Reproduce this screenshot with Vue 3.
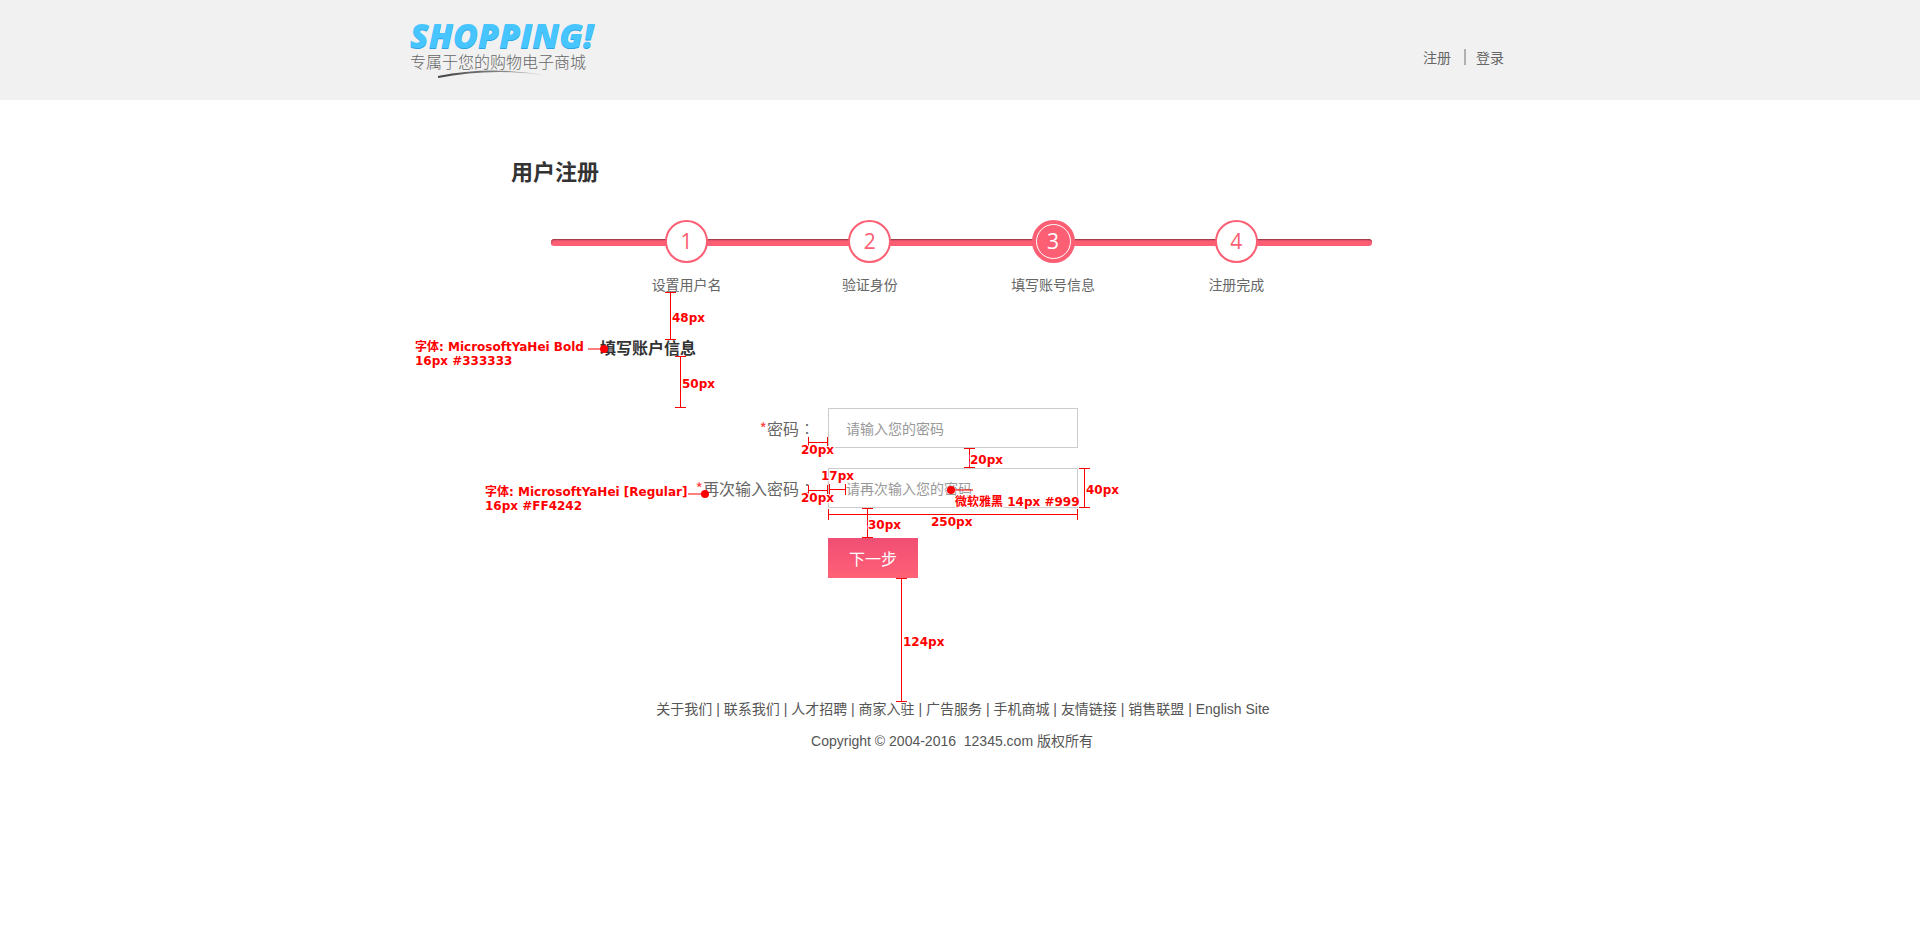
<script setup>
import { ref } from 'vue'

const password = ref('')
const confirmPassword = ref('')

const steps = [
  { id: 1, label: '设置用户名' },
  { id: 2, label: '验证身份' },
  { id: 3, label: '填写账号信息' },
  { id: 4, label: '注册完成' },
]
const currentStep = 3

const footerLinks = ['关于我们', '联系我们', '人才招聘', '商家入驻', '广告服务', '手机商城', '友情链接', '销售联盟', 'English Site']

// Vertical spacing marks: x of the stem, from top to bottom
const verticals = [
  { x: 260, top: 292, bottom: 340, text: '48px', tx: 262, ty: 322 },
  { x: 270, top: 356, bottom: 408, text: '50px', tx: 272, ty: 388 },
  { x: 559, top: 448, bottom: 468, text: '20px', tx: 560, ty: 464 },
  { x: 674, top: 468, bottom: 508, text: '40px', tx: 676, ty: 494 },
  { x: 457, top: 508, bottom: 538, text: '30px', tx: 458, ty: 529 },
  { x: 491, top: 578, bottom: 702, text: '124px', tx: 493, ty: 646 },
]

// Horizontal spacing marks: y of the stem, from left to right
const horizontals = [
  { y: 442, left: 398, right: 418, text: '20px', tx: 391, ty: 454 },
  { y: 490, left: 398, right: 418, text: '20px', tx: 391, ty: 502 },
  { y: 489, left: 419, right: 436, text: '17px', tx: 411, ty: 480 },
  { y: 514, left: 418, right: 668, text: '250px', tx: 521, ty: 526 },
]

// Leader dots with the lines that lead to their notes
const dots = [
  { x: 194, y: 349, from: 178, to: 194 },
  { x: 295, y: 494, from: 278, to: 295 },
  { x: 541, y: 490, from: 541, to: 563 },
]

const notes = [
  { x: 5, y: 351, text: '字体: MicrosoftYaHei Bold' },
  { x: 5, y: 365, text: '16px #333333' },
  { x: 75, y: 496, text: '字体: MicrosoftYaHei [Regular]' },
  { x: 75, y: 510, text: '16px #FF4242' },
  { x: 545, y: 506, text: '微软雅黑 14px #999' },
]
</script>

<template>
  <div class="page">
    <header class="header">
      <div class="header-inner">
        <a class="logo" href="#">
          <span class="logo-name">SHOPPING!</span>
          <span class="logo-slogan">专属于您的购物电子商城</span>
          <svg class="logo-swoosh" width="112" height="10" viewBox="0 0 112 10" aria-hidden="true">
            <defs>
              <linearGradient id="swoosh" x1="0" x2="1" y1="0" y2="0">
                <stop offset="0" stop-color="#444" />
                <stop offset="0.6" stop-color="#888" />
                <stop offset="1" stop-color="#ccc" />
              </linearGradient>
            </defs>
            <path d="M0 6 Q55 -5 111 6 Q55 -3 0 8 Z" fill="url(#swoosh)" />
          </svg>
        </a>
        <nav class="account">
          <a href="#">注册</a>
          <span class="divider"></span>
          <a href="#">登录</a>
        </nav>
      </div>
    </header>

    <main class="main">
      <h1 class="title">用户注册</h1>

      <ol class="steps">
        <li v-for="step in steps" :key="step.id" class="step" :class="{ active: step.id === currentStep }">
          <span class="step-number"><span class="step-ring">{{ step.id }}</span></span>
          <span class="step-label">{{ step.label }}</span>
        </li>
      </ol>

      <h2 class="subtitle">填写账户信息</h2>

      <form class="form" @submit.prevent>
        <div class="field">
          <label for="password"><span class="required">*</span>密码<span class="colon">：</span></label>
          <input id="password" v-model="password" type="password" placeholder="请输入您的密码" />
        </div>
        <div class="field">
          <label for="confirm"><span class="required">*</span>再次输入密码<span class="colon">：</span></label>
          <input id="confirm" v-model="confirmPassword" type="password" placeholder="请再次输入您的密码" />
        </div>
        <button class="next" type="submit">下一步</button>
      </form>
    </main>

    <footer class="footer">
      <nav class="footer-links">
        <template v-for="(link, i) in footerLinks" :key="link"><template v-if="i"> | </template><a href="#">{{ link }}</a></template>
      </nav>
      <p class="copyright">Copyright © 2004-2016&nbsp; 12345.com 版权所有</p>
    </footer>

    <svg class="marks" width="1100" height="720" viewBox="0 0 1100 720">
      <g v-for="m in verticals" :key="'v' + m.top" shape-rendering="crispEdges">
        <rect :x="m.x" :y="m.top" width="1" :height="m.bottom - m.top" />
        <rect :x="m.x - 5" :y="m.top" width="11" height="1" />
        <rect :x="m.x - 5" :y="m.bottom - 1" width="11" height="1" />
      </g>
      <g v-for="m in horizontals" :key="'h' + m.y" shape-rendering="crispEdges">
        <rect :x="m.left" :y="m.y" :width="m.right - m.left" height="1" />
        <rect :x="m.left" :y="m.y - 5" width="1" height="11" />
        <rect :x="m.right - 1" :y="m.y - 5" width="1" height="11" />
      </g>
      <g v-for="d in dots" :key="'d' + d.x">
        <rect class="leader" :x="d.from" :y="d.y - 1" :width="d.to - d.from" height="2" />
        <circle :cx="d.x" :cy="d.y" r="4" />
      </g>
      <text v-for="m in [...verticals, ...horizontals]" :key="m.text + m.ty" :x="m.tx" :y="m.ty">{{ m.text }}</text>
      <text v-for="n in notes" :key="n.text" :x="n.x" :y="n.y">{{ n.text }}</text>
    </svg>
  </div>
</template>

<style>
body {
  margin: 0;
  background: #fff;
}
</style>

<style scoped>
.page {
  position: relative;
  overflow: hidden;
  font-family: "Noto Sans CJK SC", sans-serif;
  font-size: 14px;
  line-height: 20px;
  color: #666;
}

a {
  color: inherit;
  text-decoration: none;
}

.header {
  background: #f1f1f1;
}

.header-inner {
  display: flex;
  justify-content: space-between;
  box-sizing: border-box;
  max-width: 1100px;
  height: 100px;
  margin: 0 auto;
}

.logo {
  display: flex;
  flex-direction: column;
  padding-top: 18px;
}

.logo-name {
  font-family: "Open Sans", sans-serif;
  font-size: 34px;
  font-style: italic;
  font-weight: 800;
  line-height: 34px;
  color: #46c5ff;
  text-shadow: 0 1px 0 #2fa2e2;
}

.logo-slogan {
  font-size: 16px;
  font-weight: 300;
  line-height: 18px;
  color: #666;
}

.logo-swoosh {
  margin-left: 28px;
}

.account {
  display: flex;
  align-items: center;
  padding: 14px 6px 0 0;
}

.divider {
  width: 2px;
  height: 16px;
  margin: 0 10px 0 13px;
  background: #b0b0b0;
}

.main {
  max-width: 900px;
  margin: 0 auto;
  padding-top: 54px;
}

.title {
  margin: 0;
  padding-left: 1px;
  font-size: 22px;
  line-height: 32px;
  color: #333;
}

.steps {
  position: relative;
  display: grid;
  grid-template-columns: repeat(4, 1fr);
  margin: 34px 38px 0 41px;
  padding: 0 44px;
  list-style: none;
}

.steps::before {
  content: "";
  position: absolute;
  top: 19px;
  left: 0;
  right: 0;
  height: 7px;
  border-radius: 4px;
  background: #fc5f74;
  box-shadow: inset 0 1px 0 #a63d4b, inset 1px 2px 1px #e0536a;
}

.step {
  position: relative;
  display: flex;
  flex-direction: column;
  align-items: center;
  gap: 11px;
}

.step-number {
  box-sizing: border-box;
  width: 43px;
  height: 43px;
  padding: 2px;
  border: 2px solid #fc5f74;
  border-radius: 50%;
  background: #fff;
  font-family: "Open Sans", sans-serif;
  font-size: 21px;
  line-height: 33px;
  text-align: center;
  color: #fc5f74;
}

.step-ring {
  display: block;
  border: 1px solid transparent;
  border-radius: 50%;
}

.active .step-number {
  background: #fc5f74;
  color: #fff;
}

.active .step-ring {
  border-color: #fff;
}

.subtitle {
  margin: 41px 0 0;
  padding-left: 90px;
  font-size: 16px;
  line-height: 24px;
  color: #333;
}

.form {
  display: flex;
  flex-direction: column;
  gap: 20px;
  padding-top: 49px;
}

.field {
  display: flex;
  align-items: center;
  gap: 13px;
}

.field label {
  width: 305px;
  font-size: 16px;
  text-align: right;
}

.required {
  color: #ff4242;
}

.colon {
  font-family: "Noto Sans CJK TC", sans-serif;
  font-weight: 300;
}

.field input {
  box-sizing: border-box;
  width: 250px;
  height: 40px;
  padding: 0 17px;
  border: 1px solid #ccc;
  border-radius: 0;
  background: #fff;
  font-family: inherit;
  font-size: 14px;
  color: #666;
}

.field input::placeholder {
  color: #999;
  opacity: 1;
}

.next {
  width: 90px;
  height: 40px;
  margin: 10px 0 0 318px;
  padding: 0;
  border: 0;
  background: linear-gradient(#f04e74, #ff6176);
  font-family: inherit;
  font-size: 16px;
  color: #fff;
}

.footer {
  padding: 121px 0 40px;
  font-family: "Liberation Sans", "Noto Sans CJK SC", sans-serif;
  text-align: center;
  color: #555;
}

.footer-links {
  padding-left: 6px;
}

.copyright {
  margin: 12px 0 0;
  padding-right: 16px;
}

.marks {
  position: absolute;
  top: 0;
  left: 50%;
  margin-left: -550px;
  fill: #f00;
  font-family: "DejaVu Sans", "Noto Sans CJK SC", sans-serif;
  font-size: 12px;
  font-weight: 700;
  pointer-events: none;
}

.marks text {
  stroke: #fff;
  stroke-width: 2px;
  paint-order: stroke;
}

.leader {
  opacity: 0.5;
}
</style>
